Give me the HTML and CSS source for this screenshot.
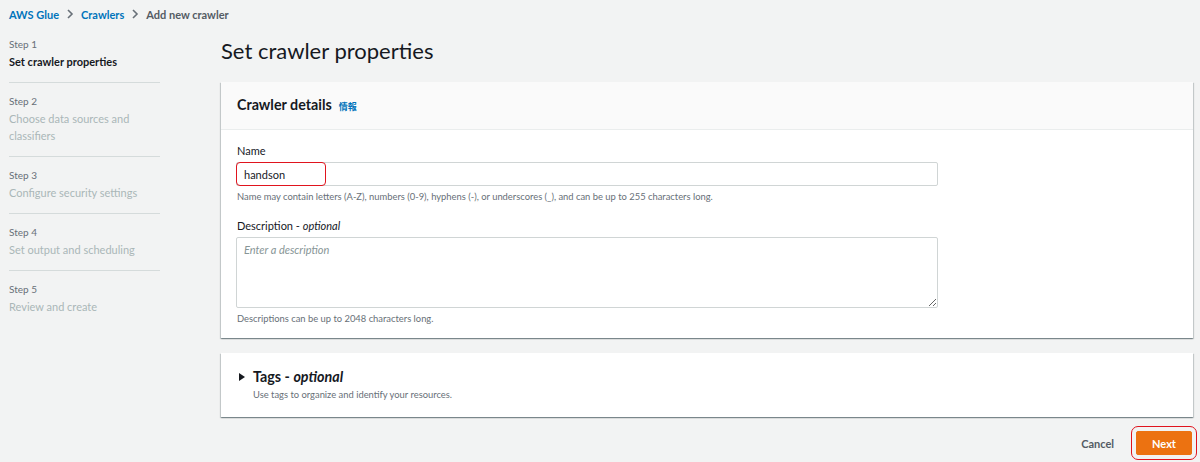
FILE: index.html
```html
<!DOCTYPE html>
<html lang="en">
<head>
<meta charset="UTF-8" />
<meta name="viewport" content="width=device-width, initial-scale=1" />
<title>Add new crawler - AWS Glue</title>
<link rel="stylesheet" href="styles.css">
</head>
<body>
<nav class="breadcrumbs">
  <a href="#">AWS Glue</a>
  <svg class="chev" viewBox="0 0 10 10"><polyline points="3,1 7,5 3,9" /></svg>
  <a href="#">Crawlers</a>
  <svg class="chev" viewBox="0 0 10 10"><polyline points="3,1 7,5 3,9" /></svg>
  <span class="current">Add new crawler</span>
</nav>
<div class="layout">
  <ul class="steps">
    <li class="step active">
      <div class="step-num">Step 1</div>
      <div class="step-title">Set crawler properties</div>
    </li>
    <li class="step">
      <div class="step-num">Step 2</div>
      <div class="step-title">Choose data sources and classifiers</div>
    </li>
    <li class="step">
      <div class="step-num">Step 3</div>
      <div class="step-title">Configure security settings</div>
    </li>
    <li class="step">
      <div class="step-num">Step 4</div>
      <div class="step-title">Set output and scheduling</div>
    </li>
    <li class="step last">
      <div class="step-num">Step 5</div>
      <div class="step-title">Review and create</div>
    </li>
  </ul>
  <main class="content">
    <h1>Set crawler properties</h1>
    <section class="panel">
      <div class="panel-header">
        <h2>Crawler details</h2>
        <a href="#" class="info">情報</a>
      </div>
      <div class="panel-body">
        <div class="field">
          <label for="crawlerName">Name</label>
          <div class="input-wrap">
            <input type="text" id="crawlerName" value="handson" />
            <span class="mark mark-name"></span>
          </div>
          <div class="hint">Name may contain letters (A-Z), numbers (0-9), hyphens (-), or underscores (_), and can be up to 255 characters long.</div>
        </div>
        <div class="field">
          <label for="crawlerDesc">Description - <i>optional</i></label>
          <textarea id="crawlerDesc" placeholder="Enter a description"></textarea>
          <div class="hint">Descriptions can be up to 2048 characters long.</div>
        </div>
      </div>
    </section>
    <section class="panel tags">
      <div class="tags-head">
        <span class="caret"></span>
        <h2>Tags - <i>optional</i></h2>
      </div>
      <div class="hint tags-hint">Use tags to organize and identify your resources.</div>
    </section>
    <div class="actions">
      <button class="btn-link">Cancel</button>
      <button class="btn-primary marked">Next</button>
    </div>
  </main>
</div>
</body>
</html>
```

FILE: styles.css
```css
body {
  margin: 0;
  padding: 0 7px 0 9px;
  min-height: 100vh;
  box-sizing: border-box;
  background: #f2f3f3;
  font-family: Lato, "Noto Sans CJK JP", sans-serif;
  font-size: 11px;
  color: #16191f;
}
a {
  text-decoration: none;
}
.breadcrumbs {
  display: flex;
  align-items: center;
  height: 28px;
  font-weight: bold;
  font-size: 11px;
}
.breadcrumbs a {
  color: #0073bb;
}
.breadcrumbs .current {
  color: #545b64;
}
.chev {
  width: 10px;
  height: 10px;
  margin: 0 6px;
  fill: none;
  stroke: #687078;
  stroke-width: 1.6;
}
.layout {
  display: grid;
  grid-template-columns: 151px 1fr;
  column-gap: 61px;
}
.steps {
  list-style: none;
  margin: 0;
  padding: 0;
  padding-top: 8px;
}
.step {
  padding: 10px 0 12px;
  border-bottom: 1px solid #d5dbdb;
  line-height: 17px;
}
.step:first-child {
  padding-top: 0;
}
.step.last {
  border-bottom: none;
}
.step-num {
  font-size: 10px;
  color: #687078;
}
.step-title {
  color: #aab7b8;
}
.step.active .step-title {
  color: #16191f;
  font-weight: bold;
}
.content h1 {
  margin: 8px 0 16px;
  font-size: 22px;
  font-weight: normal;
  line-height: 30px;
}
.panel {
  background: #fff;
  box-shadow: 0 1px 1px 0 rgba(0,28,36,0.3), 1px 1px 1px 0 rgba(0,28,36,0.15), -1px 1px 1px 0 rgba(0,28,36,0.15);
}
.panel-header {
  display: flex;
  align-items: baseline;
  gap: 7px;
  height: 48px;
  box-sizing: border-box;
  padding: 13px 16px 0;
  background: #fafafa;
  border-bottom: 1px solid #eaeded;
}
.panel h2 {
  margin: 0;
  font-size: 14.3px;
  font-weight: bold;
  line-height: 20px;
}
.info {
  color: #0073bb;
  font-size: 9px;
  font-weight: bold;
}
.panel-body {
  padding: 12px 16px 13px;
}
.field label {
  display: block;
  line-height: 17px;
  margin-bottom: 3px;
}
.field + .field {
  margin-top: 14px;
}
.input-wrap {
  position: relative;
  width: 702px;
}
.field input,
.field textarea {
  display: block;
  width: 702px;
  box-sizing: border-box;
  margin: 0;
  margin-left: -1px;
  border: 1px solid #d0d5d5;
  border-radius: 2px;
  font-family: inherit;
  font-size: 11px;
  color: #16191f;
  background: #fff;
}
.field input {
  height: 24px;
  padding: 0 7px;
}
.field textarea {
  height: 71px;
  padding: 5px 7px;
  resize: vertical;
}
.field textarea::placeholder {
  color: #879596;
  font-style: italic;
}
.hint {
  margin-top: 4px;
  font-size: 9.4px;
  color: #687078;
  line-height: 13px;
}
.mark {
  position: absolute;
  border: 1.5px solid #e0141e;
  border-radius: 4px;
  pointer-events: none;
}
.mark-name {
  left: -1px;
  top: 0;
  width: 88px;
  height: 22px;
}
.tags {
  margin-top: 15px;
  padding: 14px 16px 16px 18px;
}
.tags-head {
  display: flex;
  align-items: center;
  gap: 8px;
}
.caret {
  width: 0;
  height: 0;
  border-top: 4px solid transparent;
  border-bottom: 4px solid transparent;
  border-left: 6px solid #16191f;
}
.tags-hint {
  margin-top: 1px;
  padding-left: 14px;
}
.actions {
  display: flex;
  justify-content: flex-end;
  align-items: center;
  gap: 22px;
  margin-top: 14px;
  padding-right: 1px;
}
.actions button {
  font-family: inherit;
  font-size: 11px;
  font-weight: bold;
  cursor: pointer;
}
.btn-link {
  background: none;
  border: none;
  color: #545b64;
  padding: 0;
}
.btn-primary {
  width: 56px;
  height: 24px;
  background: #ec7211;
  border: 1px solid #ec7211;
  border-radius: 2px;
  color: #fff;
}
.btn-primary.marked {
  outline: 1.5px solid #e0141e;
  outline-offset: 4px;
}
```
